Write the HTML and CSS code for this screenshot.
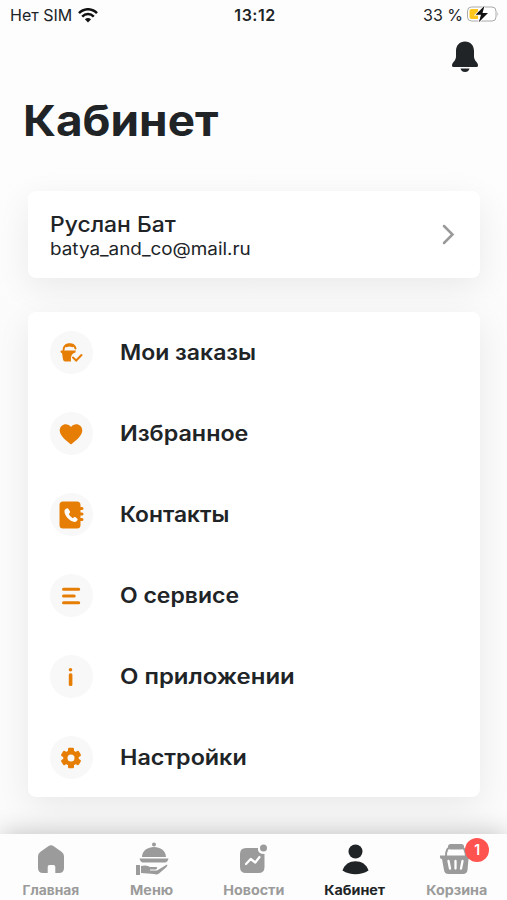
FILE: index.html
```html
<!DOCTYPE html>
<html lang="ru">
<head>
<meta charset="utf-8">
<title>Кабинет</title>
<link rel="stylesheet" href="styles.css">
</head>
<body>
<div class="app">
  <header class="status">
    <div class="carrier"><span class="sim">Нет SIM</span>
      <svg width="20" height="15" viewBox="0 0 20 15" fill="none" stroke="#111" stroke-width="2.5"><path d="M1 5.2C6-.1 14-.1 19 5.2M4.2 8.6C7.5 5.2 12.500 5.200 15.800 8.600"/><path d="M10 14.500 6.900 11.300Q10 8.700 13.100 11.300Z" fill="#111" stroke="none"/></svg>
    </div>
    <time class="clock">13:12</time>
    <div class="battery"><span class="percent">33 %</span>
      <svg width="34" height="18" viewBox="0 0 34 18"><rect x="1.500" y="2" width="28.500" height="14" rx="4" fill="#fff" stroke="#aaa"/><path d="M5.500 4H12v10H5.500Q3.500 14 3.500 12V6Q3.500 4 5.500 4Z" fill="#ffc71c"/><path d="M31.500 6.500Q33 9 31.500 11.500Z" fill="#aaa"/><path d="M18.500.7 9.600 9.800H15L12.800 17.300 22 8H16.500Z" fill="#111" stroke="#fff" stroke-width="1.500" paint-order="stroke"/></svg>
    </div>
  </header>
  <div class="actions">
    <svg width="28" height="32" viewBox="0 0 28 32" fill="#202427"><path d="M14 .5C8.500.5 5 4.500 5 10v5.500C5 20 1 21 1 24.500Q1 26 2.500 26h23Q27 26 27 24.500C27 21 23 20 23 15.500V10C23 4.500 19.500.5 14 .5Z"/><path d="M9.500 27.500h9Q17.500 31 14 31T9.500 27.500Z"/></svg>
  </div>
  <h1 class="title">Кабинет</h1>
  <main class="content">
    <section class="card profile">
      <div class="person"><div class="name">Руслан Бат</div><div class="email">batya_and_co@mail.ru</div></div>
      <svg width="13" height="21" viewBox="0 0 13 21" fill="none" stroke="#999" stroke-width="2.500" stroke-linecap="round"><path d="m2 2 8.500 8.500L2 19"/></svg>
    </section>
    <nav class="card menu">
      <a class="row"><span class="disc"><svg width="24" height="24" viewBox="0 0 24 24" fill="#e67e05"><path d="M2 9.500H16.800L16.400 11.500Q11 12.500 12 20.500H6.200Q4.500 20.500 4 18.500L3 12Q1.500 12 1.500 10.500Z"/><path d="M4.500 9C5 1.500 15 1.500 16.500 7.500M14 16.500l3.200 3L22.500 14" fill="none" stroke="#e67e05" stroke-width="2" stroke-linecap="round"/><path d="M7.500 4.800Q10.500 3.300 13.500 4.800" fill="none" stroke="#e67e05" stroke-width="2.800" stroke-linecap="round"/></svg></span><span class="label l1">Мои заказы</span></a>
      <a class="row"><span class="disc"><svg width="24" height="22" viewBox="0 0 24 22" fill="#e67e05"><path d="M12 21.500C7 17.500.7 12.500.7 7.500.7 1 8.500-1 12 4c3.500-5 11.300-3 11.300 3.500 0 5-6.300 10-11.300 14Z"/></svg></span><span class="label l2">Избранное</span></a>
      <a class="row"><span class="disc"><svg width="26" height="28" viewBox="0 0 26 28" fill="#e67e05"><path d="M5 .5H19Q22.500.5 22.500 4V6H24Q25.500 6 25.500 7.500T24 9H22.500v2.500H24Q25.500 11.500 25.500 13T24 14.500H22.500V17H24Q25.500 17 25.500 18.500T24 20H22.500v4q0 3.500-3.500 3.500H5Q1.500 27.500 1.500 24V4Q1.500.5 5 .5Z"/><path d="M6.700 8.800 9 7.300Q9.800 7 10.300 7.800L12 10.600Q12.300 11.300 11.700 11.900L10.700 13Q12 15.700 14.700 17.200L16 16.200Q16.600 15.700 17.300 16.100L19.300 17.700Q20 18.400 19.400 19.200L17.900 20.800C13 22 5 14 6.700 8.800Z" fill="#fff"/></svg></span><span class="label l3">Контакты</span></a>
      <a class="row"><span class="disc"><svg width="20" height="20" viewBox="0 0 20 20" fill="none" stroke="#e67e05" stroke-width="3" stroke-linecap="round"><path d="M2.500 3.300H17.700M2.500 10H13.200M2.500 16.800H17.700"/></svg></span><span class="label l4">О сервисе</span></a>
      <a class="row"><span class="disc"><svg width="6" height="20" viewBox="0 0 6 20" fill="#e67e05"><circle cx="2.500" cy="2.700" r="1.800"/><rect x=".8" y="6.300" width="3.600" height="12.700" rx="1.500"/></svg></span><span class="label l5">О приложении</span></a>
      <a class="row"><span class="disc"><svg width="22" height="22" viewBox="0 0 22 22"><g fill="#e67e05"><circle cx="11" cy="11" r="7.800"/><g id="tooth"><rect x="8" y=".8" width="6" height="20.400" rx="1.300"/></g><use href="#tooth" transform="rotate(60 11 11)"/><use href="#tooth" transform="rotate(120 11 11)"/></g><circle cx="11" cy="11" r="3.500" fill="#f8f8f8"/></svg></span><span class="label l6">Настройки</span></a>
    </nav>
  </main>
  <footer class="tabs">
    <a class="tab"><svg width="34" height="34" viewBox="0 0 34 34" fill="#9b9b9b"><path d="M14.300 4.200Q17 2.200 19.700 4.200L27.500 9.700Q30 11.500 30 14V26Q30 31 25 31H21.300V25Q21.300 23 19.500 23H15.500Q13.700 23 13.700 25V31H9Q4 31 4 26V14Q4 11.500 6.500 9.700Z"/></svg><span class="t1">Главная</span></a>
    <a class="tab"><svg width="34" height="34" viewBox="0 0 34 34" fill="#9b9b9b"><circle cx="19" cy="2.500" r="2"/><path d="M7 15C7 1.500 31 1.500 31 15ZM4.500 16.500H33.500Q32.500 20.500 30 20.500H8Q5.500 20.500 4.500 16.500ZM1 23H5V33H1ZM6 24Q12 22.500 15 25H21Q23.500 25.500 21 27.500H15V28.500H22L32 22.500Q33 23 31 25.500L24 31.500Q22 33 19 32L6 31Z"/></svg><span class="t2">Меню</span></a>
    <a class="tab"><svg width="34" height="34" viewBox="0 0 34 34"><path d="M10 6H22Q21 12 28.500 12V25Q28.500 31 22.500 31H10Q4 31 4 25V12Q4 6 10 6Z" fill="#9b9b9b"/><circle cx="27.500" cy="6" r="3.500" fill="#9b9b9b"/><path d="m10 22 4.700-5 4.600 3.500L23.500 15" fill="none" stroke="#fff" stroke-width="2.200" stroke-linecap="round" stroke-linejoin="round"/></svg><span class="t3">Новости</span></a>
    <a class="tab active"><svg width="34" height="34" viewBox="0 0 34 34" fill="#202427"><circle cx="17.500" cy="9.500" r="7"/><path d="M4.500 28.500C8 16 27 16 30.500 28.500 23 33.500 12 33.500 4.500 28.500Z"/></svg><span class="t4">Кабинет</span></a>
    <a class="tab"><span class="basket"><svg width="34" height="34" viewBox="0 0 34 34"><path d="M7 14C7 7 9 5 12.500 5H22Q26 5 27 14" fill="none" stroke="#9b9b9b" stroke-width="2"/><rect x="9" y="2" width="16" height="5.500" rx="2.700" fill="#9b9b9b"/><path d="M1 13.500H31.500Q32 17 29.500 17L28.500 28Q28 32 24 32H9.500Q5.500 32 5 28L3 17Q.5 17 1 13.500Z" fill="#9b9b9b"/><path d="m9.500 19 1.500 7.500M16.500 19v7.500M23.500 19 22 26.500" stroke="#fff" stroke-width="2.300" stroke-linecap="round"/></svg><b class="badge">1</b></span><span class="t5">Корзина</span></a>
  </footer>
</div>
</body>
</html>
```
FILE: styles.css
```css
* { box-sizing: border-box; }
body { margin: 0; font-family: Inter, "Noto Sans", sans-serif; color: #202427; }
.app { width: 507px; height: 900px; overflow: hidden; display: flex; flex-direction: column; background: #fdfdfd; }
.status { height: 30px; display: grid; grid-template-columns: 1fr auto 1fr; align-items: center; padding: 0 7px 0 10px; font-size: 16px; }
.carrier, .battery { display: flex; align-items: center; gap: 6px; white-space: nowrap; }
.battery { justify-content: flex-end; gap: 3px; }
.battery svg { margin-top: -2px; }
.clock { font-weight: 600; letter-spacing: .5px; }
.actions { height: 50px; display: flex; justify-content: flex-end; padding: 11px 28px 0 0; }
.title { margin: 12px 0 0 23px; height: 57px; line-height: 56px; font-size: 43px; font-weight: 700; white-space: nowrap; transform: scaleX(1.066); }
.content { flex: 1; padding: 42px 27px 0 28px; display: flex; flex-direction: column; gap: 34px; background: linear-gradient(#fdfdfd, #fbfbfb 30%); }
.card { background: #fff; border-radius: 8px; box-shadow: 0 10px 34px rgba(0,0,0,.075); }
.profile { height: 87px; flex: none; display: flex; justify-content: space-between; align-items: center; padding: 0 25px 0 22px; }
.person { padding-top: 2px; }
.name, .email, .label, .title { transform-origin: left center; }
.name { font-size: 21px; line-height: 26px; font-weight: 550; white-space: nowrap; transform: scaleX(1.09); }
.email { font-size: 17px; line-height: 22px; white-space: nowrap; transform: scaleX(1.11); }
.menu { height: 485px; flex: none; }
.row { height: 81px; display: flex; align-items: center; gap: 27px; padding-left: 22px; }
.disc { width: 43px; height: 43px; border-radius: 50%; background: #f8f8f8; display: flex; align-items: center; justify-content: center; }
.disc svg { margin-right: 2px; }
.label { font-size: 21px; line-height: 28px; font-weight: 570; white-space: nowrap; }
.l1 { transform: scaleX(1.095); }
.l2 { transform: scaleX(1.11); }
.l3 { transform: scaleX(1.085); }
.l4 { transform: scaleX(1.095); }
.l5 { transform: scaleX(1.14); }
.l6 { transform: scaleX(1.11); }
.tabs { position: relative; height: 66px; flex: none; display: grid; grid-template-columns: repeat(5, 1fr); background: #fdfdfd; box-shadow: 0 -4px 24px -2px rgba(0,0,0,.22); }
.tab { display: flex; flex-direction: column; align-items: center; padding-top: 8px; gap: 5px; color: #9b9b9b; font-size: 13px; line-height: 18px; font-weight: 700; white-space: nowrap; }
.active { color: #202427; }
.tab svg { display: block; }
.t1 { transform: scaleX(1.06); }
.t2, .t3, .t4, .t5 { transform: scaleX(1.1); }
.basket { position: relative; }
.badge { position: absolute; left: 26px; top: -4px; width: 24px; height: 24px; border-radius: 50%; background: #ff5350; color: #fff; font-size: 14px; font-weight: 600; line-height: 24px; text-align: center; }
```
